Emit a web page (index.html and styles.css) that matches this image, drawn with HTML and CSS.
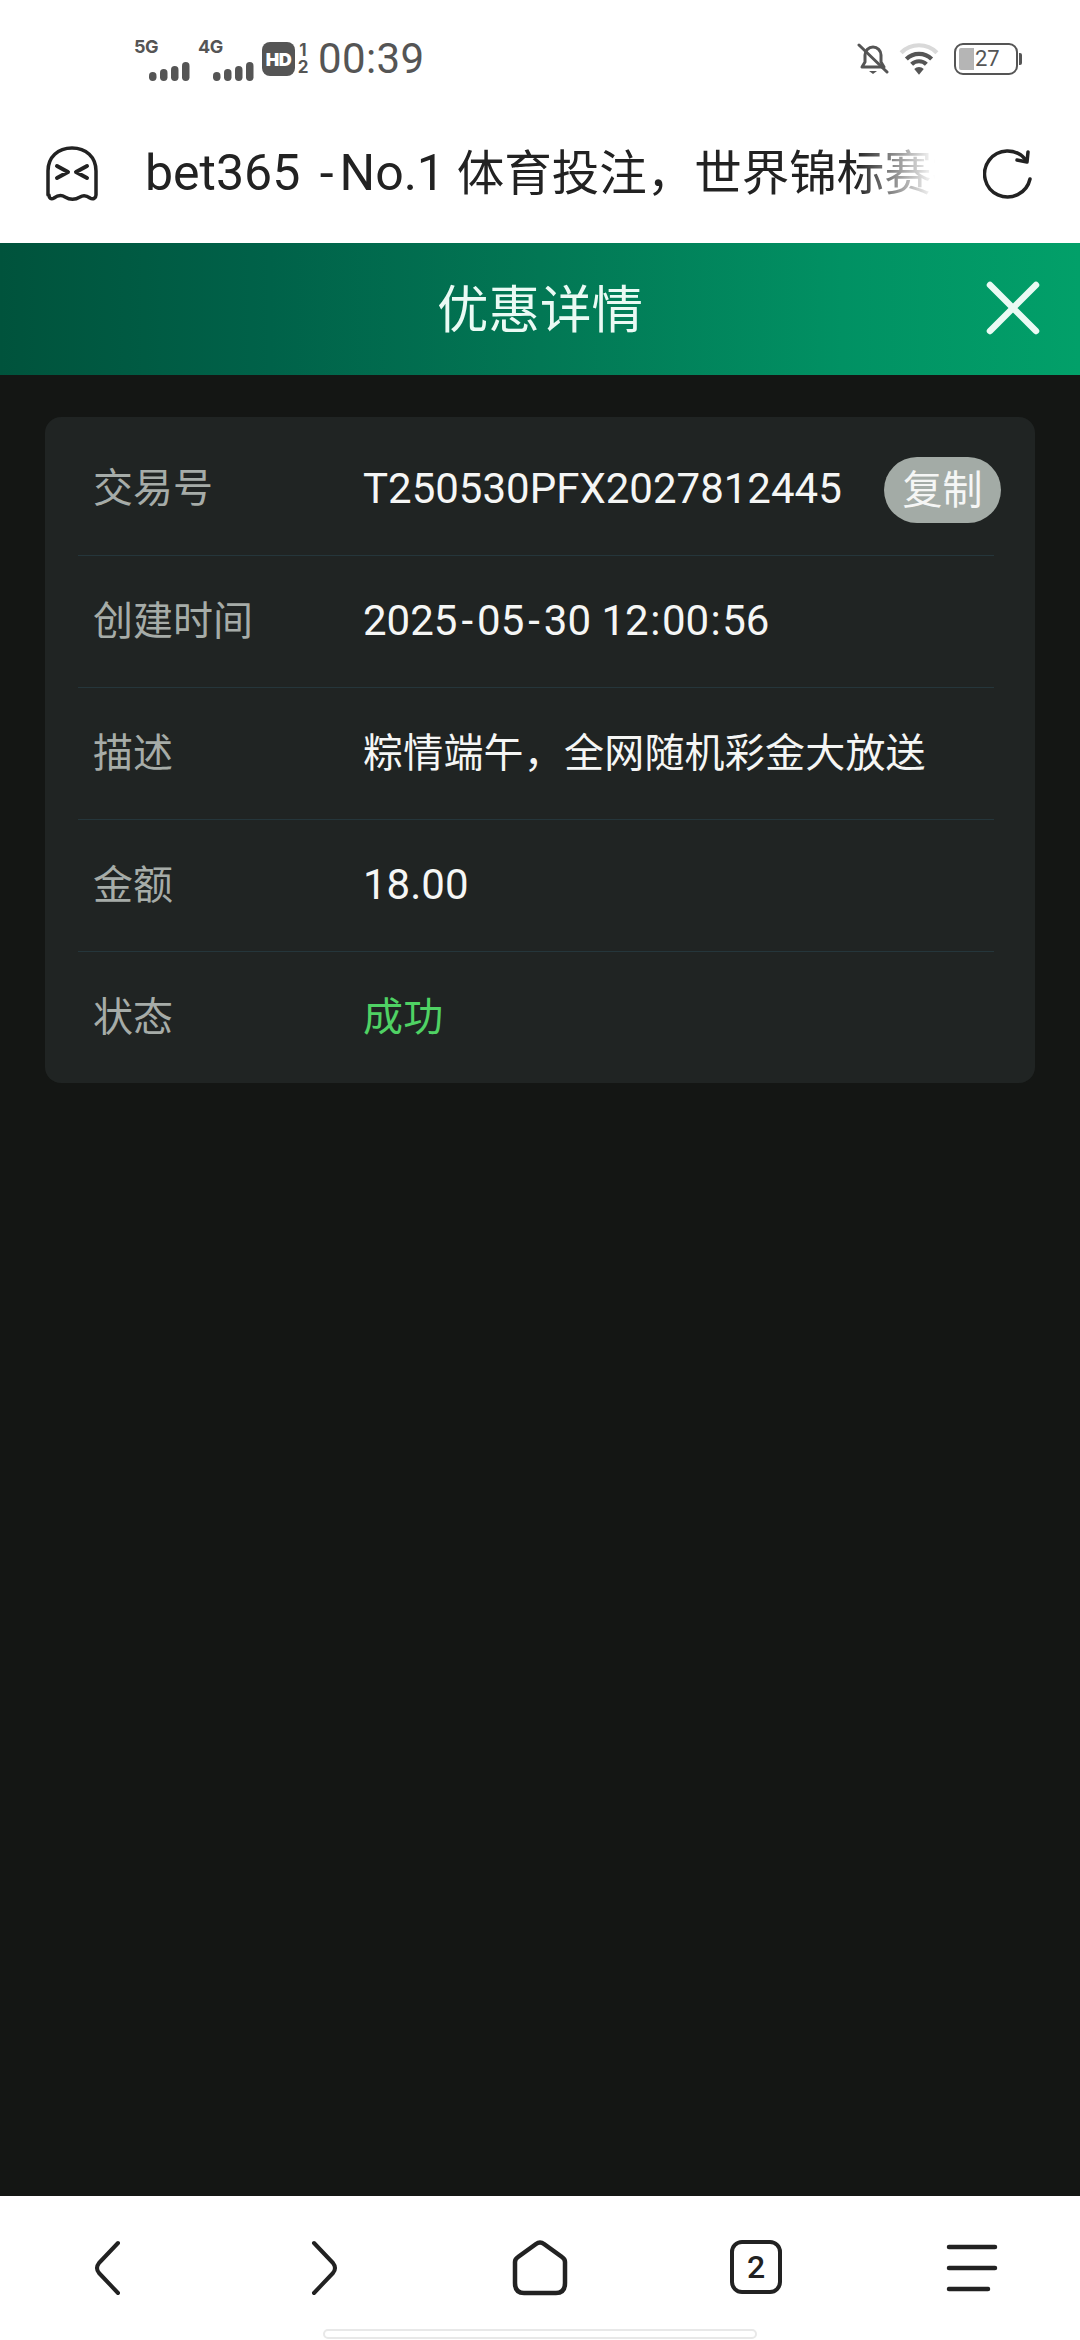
FILE: index.html
```html
<!DOCTYPE html>
<html lang="zh-CN">
<head>
<meta charset="utf-8">
<title>优惠详情</title>
<link rel="stylesheet" href="styles.css">
</head>
<body>
<div class="phone">
  <header class="status">
    <div class="status-left">
      <div class="net"><span class="net-label">5G</span>
        <svg class="bars" width="42" height="20" viewBox="0 0 42 20"><rect x="0" y="11" width="7.500" height="9" rx="3.700"/><rect x="11" y="8" width="7.500" height="12" rx="3.700"/><rect x="22" y="5" width="7.500" height="15" rx="3.700"/><rect x="33" y="1" width="7.500" height="19" rx="3.700"/></svg>
      </div>
      <div class="net"><span class="net-label">4G</span>
        <svg class="bars" width="42" height="20" viewBox="0 0 42 20"><rect x="0" y="11" width="7.500" height="9" rx="3.700"/><rect x="11" y="8" width="7.500" height="12" rx="3.700"/><rect x="22" y="5" width="7.500" height="15" rx="3.700"/><rect x="33" y="1" width="7.500" height="19" rx="3.700"/></svg>
      </div>
      <span class="hd">HD</span>
      <span class="sims"><span>1</span><span>2</span></span>
      <span class="clock">00:39</span>
    </div>
    <div class="status-right">
      <svg class="bell" width="32" height="34" viewBox="0 0 32 34" fill="none" stroke="#555" stroke-width="3"><path d="M5 25h22l-3-5v-7a8 8 0 0 0-8-8 8 8 0 0 0-8 8v7z" stroke-linejoin="round"/><path d="M2 3l28 27" stroke-linecap="round"/><path d="M12 29h8l-4 3z" fill="#555" stroke="none"/></svg>
      <svg width="40" height="32" viewBox="0 0 38 30" fill="none"><path d="M2 9a24 24 0 0 1 34 0" stroke="#d9d9d9" stroke-width="4"/><path d="M7 15a17 17 0 0 1 24 0" stroke="#555" stroke-width="4"/><path d="M12 20a10 10 0 0 1 14 0" stroke="#555" stroke-width="4"/><path d="M14.500 24.500a6.500 6.500 0 0 1 9 0L19 30z" fill="#555"/></svg>
      <div class="battery"><span class="battery-fill"></span><span class="battery-num">27</span></div>
      <span class="battery-tip"></span>
    </div>
  </header>

  <div class="addressbar">
    <svg width="54" height="56" viewBox="0 0 54 56" fill="none" stroke="#222" stroke-width="3.500" stroke-linecap="round" stroke-linejoin="round"><path d="M3 49V25C3 11 13 2 27 2s24 9 24 23v24c0 3-3 5-6 3-4-3-7-3-10-1-5 3-10 3-15 0-3-2-7-2-11 1-3 2-5 0-5-3z"/><path d="M12 20l11 6-11 6M42 20l-11 6 11 6" stroke-width="4"/></svg>
    <div class="page-title"><span class="latin">bet365 <span class="title-dash">-</span>No.1</span> 体育投注，世界锦标赛投注平台</div>
    <svg width="50" height="50" viewBox="0 0 50 50" fill="none" stroke="#222" stroke-width="3.500" stroke-linecap="round" stroke-linejoin="round"><path d="M47 30a23 23 0 1 1-5-20"/><path d="M45 3l-1 10-10-2"/></svg>
  </div>

  <div class="appbar">
    <h1 class="appbar-title">优惠详情</h1>
    <svg class="appbar-close" width="54" height="54" viewBox="0 0 54 54" fill="none" stroke="#eafaf4" stroke-width="6.500" stroke-linecap="round"><path d="M4 4l46 46M50 4L4 50"/></svg>
  </div>

  <main class="content">
    <section class="card">
      <div class="row">
        <span class="label">交易号</span>
        <span class="value num">T250530PFX2027812445</span>
        <button class="copy">复制</button>
      </div>
      <div class="row"><span class="label">创建时间</span><span class="value num">2025<span class="dash">-</span>05<span class="dash">-</span>30 12<span class="colon">:</span>00<span class="colon">:</span>56</span></div>
      <div class="row"><span class="label">描述</span><span class="value">粽情端午，全网随机彩金大放送</span></div>
      <div class="row"><span class="label">金额</span><span class="value num">18.00</span></div>
      <div class="row"><span class="label">状态</span><span class="value success">成功</span></div>
    </section>
  </main>

  <nav class="bottom">
    <div class="nav-grid">
      <svg width="60" height="56" viewBox="0 0 60 56" fill="none" stroke="#222" stroke-width="4" stroke-linecap="round" stroke-linejoin="round"><path d="M40 3L21 23q-4 5 0 10l19 20"/></svg>
      <svg width="60" height="56" viewBox="0 0 60 56" fill="none" stroke="#222" stroke-width="4" stroke-linecap="round" stroke-linejoin="round"><path d="M20 3l19 20q4 5 0 10L20 53"/></svg>
      <svg width="60" height="56" viewBox="0 0 60 56" fill="none" stroke="#222" stroke-width="4.500" stroke-linejoin="round"><path d="M5 22q0-3 3-5L26 4q4-3 8 0l18 13q3 2 3 5v21q0 10-9 10H14q-9 0-9-10z"/></svg>
      <div class="tabs"><span>2</span></div>
      <svg width="60" height="56" viewBox="0 0 60 56" fill="none" stroke="#222" stroke-width="4.500" stroke-linecap="round"><path d="M7 7h46M7 28h46M7 49h39"/></svg>
    </div>
    <div class="indicator"></div>
  </nav>
</div>
</body>
</html>
```
FILE: styles.css
```css
* { box-sizing: border-box; }
html, body { margin: 0; padding: 0; }
body { font-family: Roboto, "Noto Sans CJK SC", sans-serif; background: #fff; }
.phone { width: 1080px; height: 2340px; display: flex; flex-direction: column; overflow: hidden; }

.status { height: 118px; flex: none; display: flex; justify-content: space-between; align-items: center; padding: 0 58px 0 134px; color: #555; }
.status-left, .status-right { display: flex; align-items: center; }
.net { position: relative; width: 64px; height: 40px; }
.net-label { position: absolute; left: 0; top: -2px; font-family: Inter, sans-serif; font-size: 18px; line-height: 20px; font-weight: 700; letter-spacing: -0.5px; }
.bars { position: absolute; left: 15px; bottom: -2px; fill: #555; }
.hd { width: 33px; height: 34px; border-radius: 8px; background: #555; color: #fff; font-family: Inter, sans-serif; font-size: 18px; font-weight: 900; letter-spacing: -0.5px; display: flex; align-items: center; justify-content: center; }
.sims { display: flex; flex-direction: column; align-items: center; width: 14px; margin-left: 1px; font-family: Inter, sans-serif; font-size: 17px; line-height: 17px; font-weight: 700; }
.clock { margin-left: 8px; font-size: 42px; line-height: 46px; letter-spacing: 0.4px; }
.status-right svg { flex: none; }
.status-right svg + svg { margin-left: 14px; }
.bell { margin-right: -4px; }
.battery { position: relative; margin-left: 15px; width: 64px; height: 32px; border: 2.5px solid #555; border-radius: 9px; padding: 3px; display: flex; }
.battery-fill { width: 15px; background: #b5b5b5; border-radius: 2px 0 0 2px; }
.battery-num { margin-left: 1px; font-size: 22px; line-height: 22px; color: #555; }
.battery-tip { width: 3px; height: 12px; margin-left: 1px; background: #555; border-radius: 0 2px 2px 0; }

.addressbar { height: 125px; flex: none; display: flex; align-items: center; padding: 0 47px 14px 45px; }
.page-title { flex: 1; margin: 0 48px 0 46px; overflow: hidden; white-space: nowrap; font-size: 47.5px; line-height: 64px; color: #222; -webkit-mask-image: linear-gradient(90deg, #000 90%, transparent 100%); mask-image: linear-gradient(90deg, #000 90%, transparent 100%); }
.latin { font-size: 50px; }
.title-dash { margin: 0 6px 0 7px; }
.dash { margin: 0 4px; }
.colon { margin: 0 1.5px; }

.appbar { position: relative; height: 132px; flex: none; display: flex; align-items: center; justify-content: center; padding-top: 4px; background: linear-gradient(90deg, #00533c 0%, #006249 25%, #027754 50%, #019163 78%, #02a069 100%); }
.appbar-title { margin: 0; font-size: 51.500px; line-height: 60px; font-weight: 400; color: #eafaf4; }
.appbar-close { position: absolute; right: 40px; top: 38px; }

.content { flex: 1; background: #141614; padding: 42px 45px 0; }
.card { background: #202423; border-radius: 16px; padding: 6px 41px 0 33px; }
.row { position: relative; display: flex; align-items: center; height: 132px; font-size: 40px; }
.row + .row { border-top: 1px solid #25363b; }
.label { width: 285px; padding: 0 0 8px 15px; flex: none; color: #a6aca8; }
.value { color: #f5f6f5; padding-bottom: 8px; letter-spacing: 0.2px; }
.num { padding-bottom: 2px; font-size: 42px; letter-spacing: 0; }
.success { color: #4fd264; }
.copy { position: absolute; right: -7px; top: 34px; width: 117px; height: 66px; padding: 0 0 6px; border: 0; border-radius: 33px; background: #a3aba6; color: #f5f6f5; font: inherit; }

.bottom { height: 144px; flex: none; position: relative; background: #fff; }
.nav-grid { display: grid; grid-template-columns: repeat(5, 1fr); justify-items: center; padding-top: 44px; }
.tabs { width: 52px; height: 54px; border: 4.5px solid #222; border-radius: 12px; display: flex; align-items: center; justify-content: center; font-size: 32px; font-weight: 500; color: #222; }
.indicator { position: absolute; left: 323px; top: 133px; width: 434px; height: 10px; border: 2px solid #e8e8e8; border-radius: 5px; }
```
